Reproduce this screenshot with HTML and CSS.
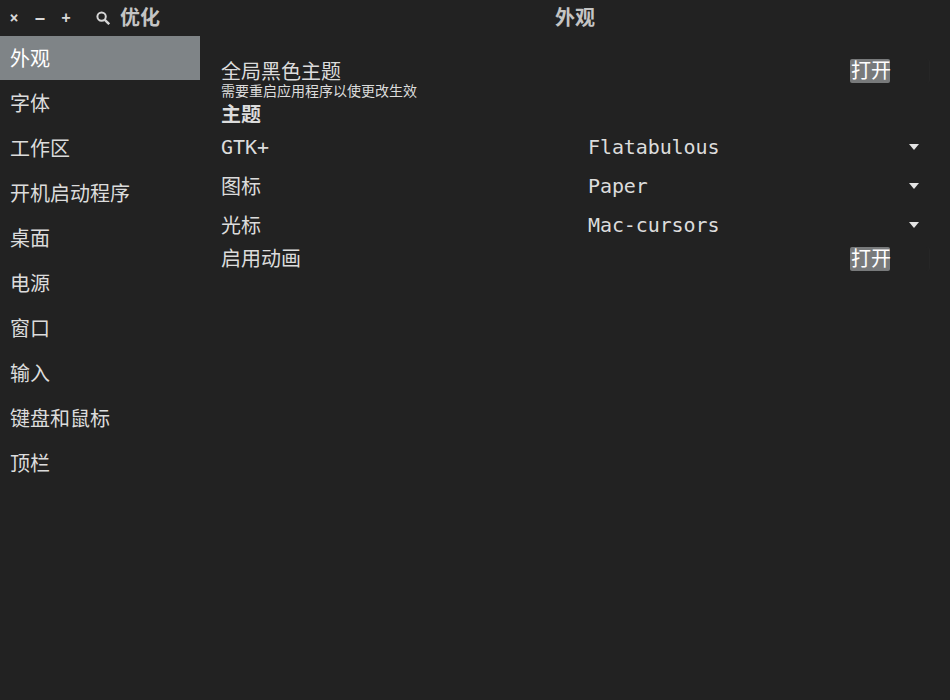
FILE: index.html
```html
<!DOCTYPE html>
<html lang="zh-CN">
<head>
  <meta charset="UTF-8">
  <title>优化</title>
  <link rel="stylesheet" href="styles.css">
</head>
<body>
  <div class="window">
    <div class="headerbar">
      <div class="header-left">
        <div class="win-buttons">
          <span class="win-btn">×</span>
          <span class="win-btn win-min">–</span>
          <span class="win-btn">+</span>
        </div>
        <svg class="search-icon" width="14" height="14" viewBox="0 0 14 14">
          <circle cx="5.6" cy="5.6" r="4.2" fill="none" stroke="#d6d6d6" stroke-width="2"/>
          <path d="M8.6 8.6 L13.2 13.2" stroke="#d6d6d6" stroke-width="2.4"/>
        </svg>
        <span class="app-title">优化</span>
      </div>
      <div class="page-title">外观</div>
    </div>

    <div class="main">
      <ul class="sidebar">
        <li class="active">外观</li>
        <li>字体</li>
        <li>工作区</li>
        <li>开机启动程序</li>
        <li>桌面</li>
        <li>电源</li>
        <li>窗口</li>
        <li>输入</li>
        <li>键盘和鼠标</li>
        <li>顶栏</li>
      </ul>

      <div class="content">
        <div class="row row-switch">
          <div>
            <div class="label label-first">全局黑色主题</div>
            <div class="hint">需要重启应用程序以使更改生效</div>
          </div>
          <div class="switch"><span class="switch-on">打开</span></div>
        </div>

        <div class="section-title">主题</div>

        <div class="row row-combo">
          <div class="label">GTK+</div>
          <div class="combo"><span>Flatabulous</span><i class="arrow"></i></div>
        </div>
        <div class="row row-combo">
          <div class="label label-cjk">图标</div>
          <div class="combo"><span>Paper</span><i class="arrow"></i></div>
        </div>
        <div class="row row-combo">
          <div class="label label-cjk">光标</div>
          <div class="combo"><span>Mac-cursors</span><i class="arrow"></i></div>
        </div>

        <div class="row row-anim">
          <div class="label">启用动画</div>
          <div class="switch"><span class="switch-on">打开</span></div>
        </div>
      </div>
    </div>
  </div>
</body>
</html>
```

FILE: styles.css
```css
* {
  box-sizing: border-box;
}

html, body {
  margin: 0;
  height: 100%;
}

body {
  background-color: #222222;
  color: #dcdcdc;
  font-family: "DejaVu Sans Mono", "Noto Sans CJK SC", monospace;
  font-size: 20px;
  overflow: hidden;
}

.window {
  width: 950px;
  height: 700px;
  display: flex;
  flex-direction: column;
}

.headerbar {
  height: 36px;
  display: flex;
  align-items: center;
}

.header-left {
  width: 200px;
  display: flex;
  align-items: center;
  padding-left: 8px;
}

.win-buttons {
  display: flex;
  width: 88px;
  gap: 14px;
}

.win-btn {
  width: 12px;
  text-align: center;
  font-size: 15px;
  font-weight: bold;
  line-height: 16px;
  color: #d8d8d8;
}

.search-icon {
  margin-right: 10px;
}

.app-title,
.page-title {
  font-weight: bold;
  color: #c4c4c4;
  line-height: 36px;
}

.page-title {
  width: 750px;
  text-align: center;
}

.main {
  flex: 1;
  display: flex;
}

.sidebar {
  width: 200px;
  margin: 0;
  padding: 0;
  list-style: none;
}

.sidebar li {
  height: 45px;
  padding-left: 10px;
  line-height: 46px;
}

.sidebar li.active {
  height: 44px;
  margin-bottom: 1px;
  background-color: #7f8487;
  color: #fff;
}

.content {
  width: 750px;
  padding: 22px 21px 0 21px;
}

.row {
  display: flex;
  justify-content: space-between;
  align-items: center;
}

.label {
  line-height: 28px;
}

.label-first {
  margin-bottom: -1px;
}

.label-cjk {
  margin-top: 2px;
}

.hint {
  font-size: 14px;
  line-height: 12px;
}

.section-title {
  font-weight: bold;
  line-height: 24px;
  margin-top: 6px;
}

.row-combo {
  height: 39px;
}

.row-switch {
  align-items: flex-start;
}

.row-anim {
  height: 29px;
}

.combo {
  width: 341px;
  display: flex;
  justify-content: space-between;
  align-items: center;
  padding-right: 10px;
  letter-spacing: -0.1px;
}

.arrow {
  width: 0;
  height: 0;
  border-left: 5px solid transparent;
  border-right: 5px solid transparent;
  border-top: 6px solid #e4e4e4;
}

.switch {
  width: 79px;
  height: 24px;
  display: flex;
  border-radius: 3px;
  box-shadow: 1px 0 0 #262626;
}

.row-switch .switch {
  margin-top: 1px;
}

.switch-on {
  width: 40px;
  height: 24px;
  padding-left: 1px;
  line-height: 24px;
  background-color: #787a7b;
  border-radius: 2px;
  color: #fff;
  white-space: nowrap;
}
```
